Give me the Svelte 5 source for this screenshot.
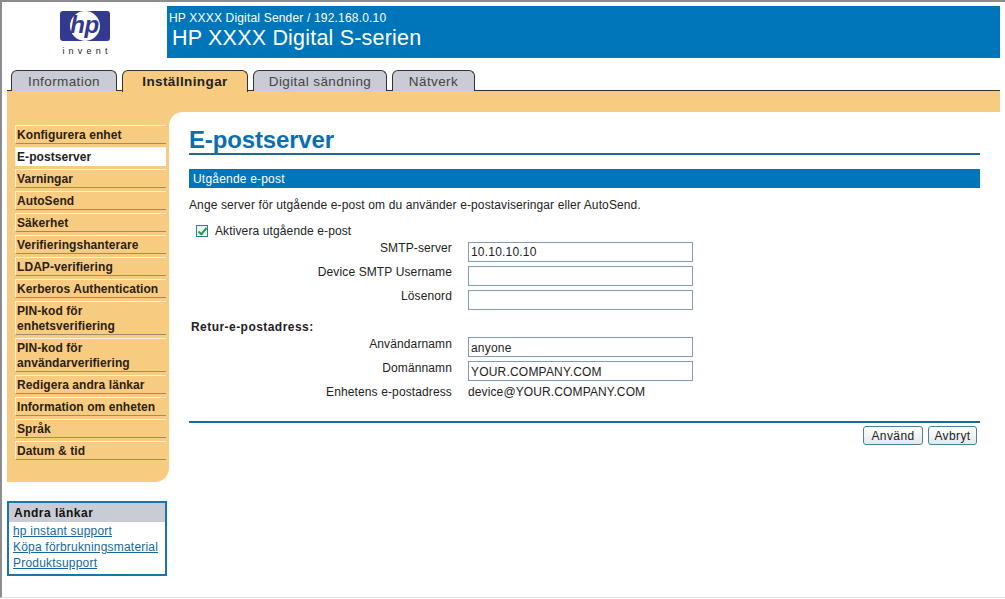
<script>
  const tabs = [
    { label: "Information" },
    { label: "Inställningar", active: true },
    { label: "Digital sändning" },
    { label: "Nätverk" },
  ];

  const menu = [
    { label: "Konfigurera enhet" },
    { label: "E-postserver", active: true },
    { label: "Varningar" },
    { label: "AutoSend" },
    { label: "Säkerhet" },
    { label: "Verifieringshanterare" },
    { label: "LDAP-verifiering" },
    { label: "Kerberos Authentication" },
    { label: "PIN-kod för enhetsverifiering" },
    { label: "PIN-kod för användarverifiering" },
    { label: "Redigera andra länkar" },
    { label: "Information om enheten" },
    { label: "Språk" },
    { label: "Datum & tid" },
  ];

  const links = ["hp instant support", "Köpa förbrukningsmaterial", "Produktsupport"];
</script>

<div class="page">
  <header class="top">
    <div class="logo">
      <svg width="50" height="30" viewBox="0 0 50 30" aria-hidden="true">
        <rect width="50" height="30" rx="3" fill="#33398f" />
        <ellipse cx="25" cy="15" rx="15" ry="15" fill="#fff" />
        <text x="24.5" y="22" text-anchor="middle" class="hp">hp</text>
      </svg>
      <span class="invent">invent</span>
    </div>
    <div class="banner">
      <div class="banner-sub">HP XXXX Digital Sender / 192.168.0.10</div>
      <div class="banner-title">HP XXXX Digital S-serien</div>
    </div>
  </header>

  <nav class="tabs">
    {#each tabs as tab}
      <a href="#tab" class="tab" class:active={tab.active}>{tab.label}</a>
    {/each}
  </nav>

  <div class="band"></div>

  <div class="columns">
    <aside class="side">
      <ul class="menu">
        {#each menu as item}
          <li class:active={item.active}>{item.label}</li>
        {/each}
      </ul>
    </aside>

    <main class="content">
      <h1>E-postserver</h1>
      <h2>Utgående e-post</h2>
      <p class="intro">Ange server för utgående e-post om du använder e-postaviseringar eller AutoSend.</p>

      <label class="check">
        <input type="checkbox" checked />
        Aktivera utgående e-post
      </label>

      <div class="form first">
        <span>SMTP-server</span>
        <input type="text" value="10.10.10.10" />
        <span>Device SMTP Username</span>
        <input type="text" />
        <span>Lösenord</span>
        <input type="password" />
      </div>

      <div class="subhead">Retur-e-postadress:</div>

      <div class="form">
        <span>Användarnamn</span>
        <input type="text" value="anyone" />
        <span>Domännamn</span>
        <input type="text" value="YOUR.COMPANY.COM" />
        <span>Enhetens e-postadress</span>
        <div class="static">device@YOUR.COMPANY.COM</div>
      </div>

      <div class="actions">
        <button>Använd</button>
        <button>Avbryt</button>
      </div>
    </main>
  </div>

  <section class="other">
    <h3>Andra länkar</h3>
    {#each links as link}
      <a href="#link">{link}</a>
    {/each}
  </section>
</div>

<style>
  :global(body) {
    margin: 0;
    background: #fff;
  }

  .page {
    box-sizing: border-box;
    width: 1005px;
    height: 598px;
    border-top: 2px solid #8c8c8c;
    border-left: 2px solid #8c8c8c;
    border-bottom: 1px solid #e2e2e2;
    padding-left: 5px;
    font-family: "Liberation Sans", Arial, sans-serif;
    font-size: 12px;
    color: #222;
    letter-spacing: 0.12px;
    overflow: hidden;
  }

  .top {
    display: flex;
    height: 52px;
    margin-top: 4px;
  }

  .logo {
    width: 160px;
    display: flex;
    flex-direction: column;
    align-items: center;
    padding-top: 5px;
    padding-right: 4px;
    box-sizing: border-box;
  }

  .hp {
    font-family: "Liberation Sans", sans-serif;
    font-style: italic;
    font-weight: bold;
    font-size: 24px;
    letter-spacing: -0.5px;
    fill: #33398f;
  }

  .invent {
    font-size: 9px;
    letter-spacing: 4.2px;
    line-height: 12px;
    margin-top: 4px;
    margin-right: -4px;
    color: #222;
  }

  .banner {
    width: 833px;
    background: #0076ba;
    color: #fff;
    padding: 6px 0 0 2px;
    box-sizing: border-box;
  }

  .banner-sub {
    font-size: 12px;
    line-height: 13px;
    letter-spacing: 0.18px;
  }

  .banner-title {
    font-size: 21.5px;
    line-height: 25px;
    margin: 1px 0 0 3px;
    letter-spacing: 0.2px;
  }

  .tabs {
    display: flex;
    gap: 5px;
    height: 21px;
    margin-top: 12px;
    padding-left: 4px;
    width: 993px;
    box-sizing: border-box;
    border-bottom: 1px solid #333;
  }

  .tab {
    box-sizing: border-box;
    height: 21px;
    padding: 3px 0 0;
    text-align: center;
    font-size: 13.5px;
    letter-spacing: 0.4px;
    color: #444;
    text-decoration: none;
    background: #c9ccd4;
    border: 1px solid #333;
    border-bottom: none;
    border-radius: 6px 6px 0 0;
    width: 106px;
  }

  .tab:nth-child(2) {
    width: 126px;
    height: 22px;
    background: #f8cc80;
    border-color: #333;
    font-weight: bold;
    color: #222;
  }

  .tab:nth-child(3) {
    width: 134px;
  }

  .tab:nth-child(4) {
    width: 83px;
  }

  .band {
    width: 993px;
    height: 21px;
    background: #f8cc80;
  }

  .columns {
    display: flex;
    width: 993px;
    background: linear-gradient(#f8cc80 20px, #fff 20px);
  }

  .side {
    box-sizing: border-box;
    width: 162px;
    height: 370px;
    padding: 13px 3px 0 8px;
    background: #f8cc80;
    border-radius: 0 0 14px 0;
  }

  .menu {
    list-style: none;
    margin: 0;
    padding: 0;
    display: flex;
    flex-direction: column;
    gap: 3px;
  }

  .menu li {
    padding: 2px 0 0 1px;
    border-top: 1px solid #fff3dc;
    border-left: 1px solid #fff3dc;
    border-bottom: 1px solid #a08a6a;
    font-weight: bold;
    font-size: 12px;
    line-height: 15px;
    letter-spacing: 0.07px;
    color: #2a2015;
  }

  .menu li.active {
    background: #fff;
    border-bottom-color: #fff;
    color: #222;
  }

  .content {
    flex: 1;
    background: #fff;
    border-radius: 14px 0 0 0;
    padding: 15px 20px 0 20px;
  }

  h1 {
    margin: 0;
    color: #0a6fb0;
    font-size: 24px;
    line-height: 26px;
    letter-spacing: -0.15px;
    border-bottom: 2px solid #1f6a90;
  }

  h2 {
    margin: 14px 0 0;
    background: #0076ba;
    color: #fff;
    font-size: 12px;
    font-weight: normal;
    line-height: 18px;
    padding: 1px 0 0 4px;
    letter-spacing: 0.2px;
  }

  .intro {
    margin: 9px 0 0;
    line-height: 16px;
  }

  .check {
    display: flex;
    align-items: center;
    gap: 7px;
    margin: 10px 0 0 7px;
    line-height: 16px;
  }

  .check input {
    appearance: none;
    position: relative;
    margin: 0;
    width: 12px;
    height: 12px;
    border: 1px solid #2f7f8f;
    background: #eef4f2;
  }

  .check input::after {
    content: "";
    position: absolute;
    left: 3px;
    top: 0;
    width: 3px;
    height: 7px;
    border: solid #2f9a4a;
    border-width: 0 2px 2px 0;
    transform: rotate(40deg);
  }

  .form {
    display: grid;
    grid-template-columns: 263px 225px;
    column-gap: 16px;
    row-gap: 4px;
    margin-top: 3px;
  }

  .form span {
    text-align: right;
    line-height: 14px;
  }

  .form.first span {
    margin-top: -1px;
  }

  .form input {
    box-sizing: border-box;
    width: 225px;
    height: 20px;
    margin: 0;
    padding: 1px 2px 0;
    border: 1px solid #7f9db0;
    font: inherit;
    letter-spacing: 0.2px;
    color: #222;
    background: #fff;
    outline: none;
  }

  .form.first input {
    padding-top: 0;
  }

  .static {
    line-height: 14px;
  }

  .subhead {
    margin: 10px 0 0 2px;
    font-weight: bold;
    letter-spacing: 0.45px;
    line-height: 14px;
  }

  .actions {
    display: flex;
    justify-content: flex-end;
    gap: 5px;
    margin-top: 22px;
    padding: 3px 3px 0 0;
    border-top: 2px solid #1f6a90;
  }

  .actions button {
    box-sizing: border-box;
    width: 60px;
    height: 19px;
    padding: 0;
    font: inherit;
    letter-spacing: 0.4px;
    color: #222;
    background: linear-gradient(#fff, #e4e8ec);
    border: 1px solid #4f7f98;
    border-radius: 3px;
  }

  .actions button + button {
    width: 49px;
  }

  .other {
    box-sizing: border-box;
    width: 160px;
    height: 75px;
    margin-top: 19px;
    border: 2px solid #1a76a8;
    display: flex;
    flex-direction: column;
    align-items: flex-start;
  }

  .other h3 {
    align-self: stretch;
    margin: 0 0 1px;
    padding: 1px 0 0 5px;
    background: #c9ccd4;
    color: #111;
    font-size: 12px;
    line-height: 18px;
    letter-spacing: 0.5px;
  }

  .other a {
    margin-left: 4px;
    color: #17689a;
    line-height: 16px;
    letter-spacing: 0.2px;
  }
</style>
